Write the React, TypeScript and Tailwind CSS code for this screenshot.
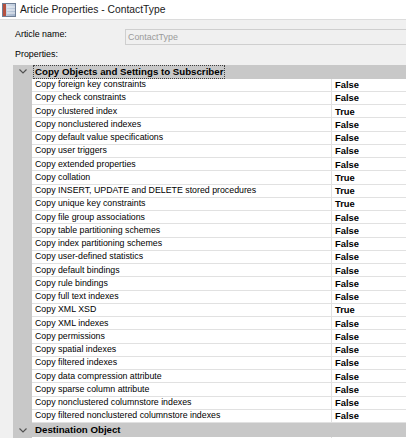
import React from "react";

const rows: [string, string][] = [
  ["Copy foreign key constraints", "False"],
  ["Copy check constraints", "False"],
  ["Copy clustered index", "True"],
  ["Copy nonclustered indexes", "False"],
  ["Copy default value specifications", "False"],
  ["Copy user triggers", "False"],
  ["Copy extended properties", "False"],
  ["Copy collation", "True"],
  ["Copy INSERT, UPDATE and DELETE stored procedures", "True"],
  ["Copy unique key constraints", "True"],
  ["Copy file group associations", "False"],
  ["Copy table partitioning schemes", "False"],
  ["Copy index partitioning schemes", "False"],
  ["Copy user-defined statistics", "False"],
  ["Copy default bindings", "False"],
  ["Copy rule bindings", "False"],
  ["Copy full text indexes", "False"],
  ["Copy XML XSD", "True"],
  ["Copy XML indexes", "False"],
  ["Copy permissions", "False"],
  ["Copy spatial indexes", "False"],
  ["Copy filtered indexes", "False"],
  ["Copy data compression attribute", "False"],
  ["Copy sparse column attribute", "False"],
  ["Copy nonclustered columnstore indexes", "False"],
  ["Copy filtered nonclustered columnstore indexes", "False"],
];

function Chevron() {
  return (
    <svg width="8" height="5" viewBox="0 0 8 5" className="block">
      <polyline points="0.5,0.5 4,4 7.5,0.5" fill="none" stroke="#505050" strokeWidth="1.1" />
    </svg>
  );
}

function Category({ label, focus }: { label: string; focus?: boolean }) {
  return (
    <div className="flex h-[14px] bg-[#c8c8c8] items-center">
      <div className="w-[19px] shrink-0 flex justify-center pl-[1px]">
        <Chevron />
      </div>
      <div className="pl-[1px]">
        <span
          className={
            "block font-bold text-[9.7px] leading-[12px] px-[1px] whitespace-nowrap text-black " +
            (focus ? "border border-dotted border-[#404040]" : "border border-transparent")
          }
        >
          {label}
        </span>
      </div>
    </div>
  );
}

export default function App() {
  return (
    <div
      className="w-[406px] h-[438px] overflow-hidden bg-[#f0f0f0] text-black"
      style={{ fontFamily: '"Liberation Sans", Arial, sans-serif' }}
    >
      <div className="h-[20px] bg-white border-b border-[#dcdcdc] flex items-center">
        <svg width="14" height="14" viewBox="0 0 14 14" className="ml-[2px] mt-[1px] shrink-0">
          <defs>
            <linearGradient id="ig" x1="0" y1="0" x2="1" y2="1">
              <stop offset="0" stopColor="#e4ebf4" />
              <stop offset="1" stopColor="#9fb0c8" />
            </linearGradient>
          </defs>
          <rect x="0.5" y="0.5" width="13" height="13" fill="url(#ig)" stroke="#6f7f96" />
          <rect x="1" y="1" width="3" height="12" fill="#b5503f" />
          <line x1="5" y1="4" x2="13" y2="4" stroke="#ffffff" strokeWidth="0.8" />
          <line x1="5" y1="7" x2="13" y2="7" stroke="#ffffff" strokeWidth="0.8" />
          <line x1="5" y1="10" x2="13" y2="10" stroke="#ffffff" strokeWidth="0.8" />
        </svg>
        <span className="ml-[4px] text-[10.3px] leading-[12px] whitespace-nowrap text-[#1a1a1a]">
          Article Properties - ContactType
        </span>
      </div>

      <div className="flex mt-[9px] h-[16px]">
        <div className="w-[125px] shrink-0 pl-[15px] text-[8.9px] leading-[11px] whitespace-nowrap">
          Article name:
        </div>
        <div className="w-[300px] shrink-0 h-[16px] border border-[#cfcfcf] bg-[#f0f0f0] pl-[2px] text-[8.9px] leading-[14px] text-[#9a9a9a] whitespace-nowrap">
          ContactType
        </div>
      </div>

      <div className="mt-[3.5px] pl-[15px] text-[8.9px] leading-[11px]">Properties:</div>

      <div className="mt-[5px] ml-[13px] w-[400px] bg-white">
        <Category label="Copy Objects and Settings to Subscriber" focus />
        {rows.map(([name, val]) => (
          <div key={name} className="flex h-[13.25px]">
            <div className="w-[19px] shrink-0 bg-[#c8c8c8]" />
            <div className="flex-1 flex border-b border-[#e1e1e1]">
              <div className="w-[300px] shrink-0 border-r border-[#e1e1e1] pl-[3px] flex items-center text-[8.8px] leading-[11px] whitespace-nowrap overflow-hidden">
                {name}
              </div>
              <div className="flex-1 pl-[3px] flex items-center font-bold text-[9.4px] leading-[11px]">
                {val}
              </div>
            </div>
          </div>
        ))}
        <Category label="Destination Object" />
        <div className="flex h-[13.25px]">
          <div className="w-[19px] shrink-0 bg-[#c8c8c8]" />
          <div className="flex-1 flex border-b border-[#e1e1e1]">
            <div className="w-[300px] shrink-0 border-r border-[#e1e1e1]" />
            <div className="flex-1" />
          </div>
        </div>
      </div>
    </div>
  );
}
